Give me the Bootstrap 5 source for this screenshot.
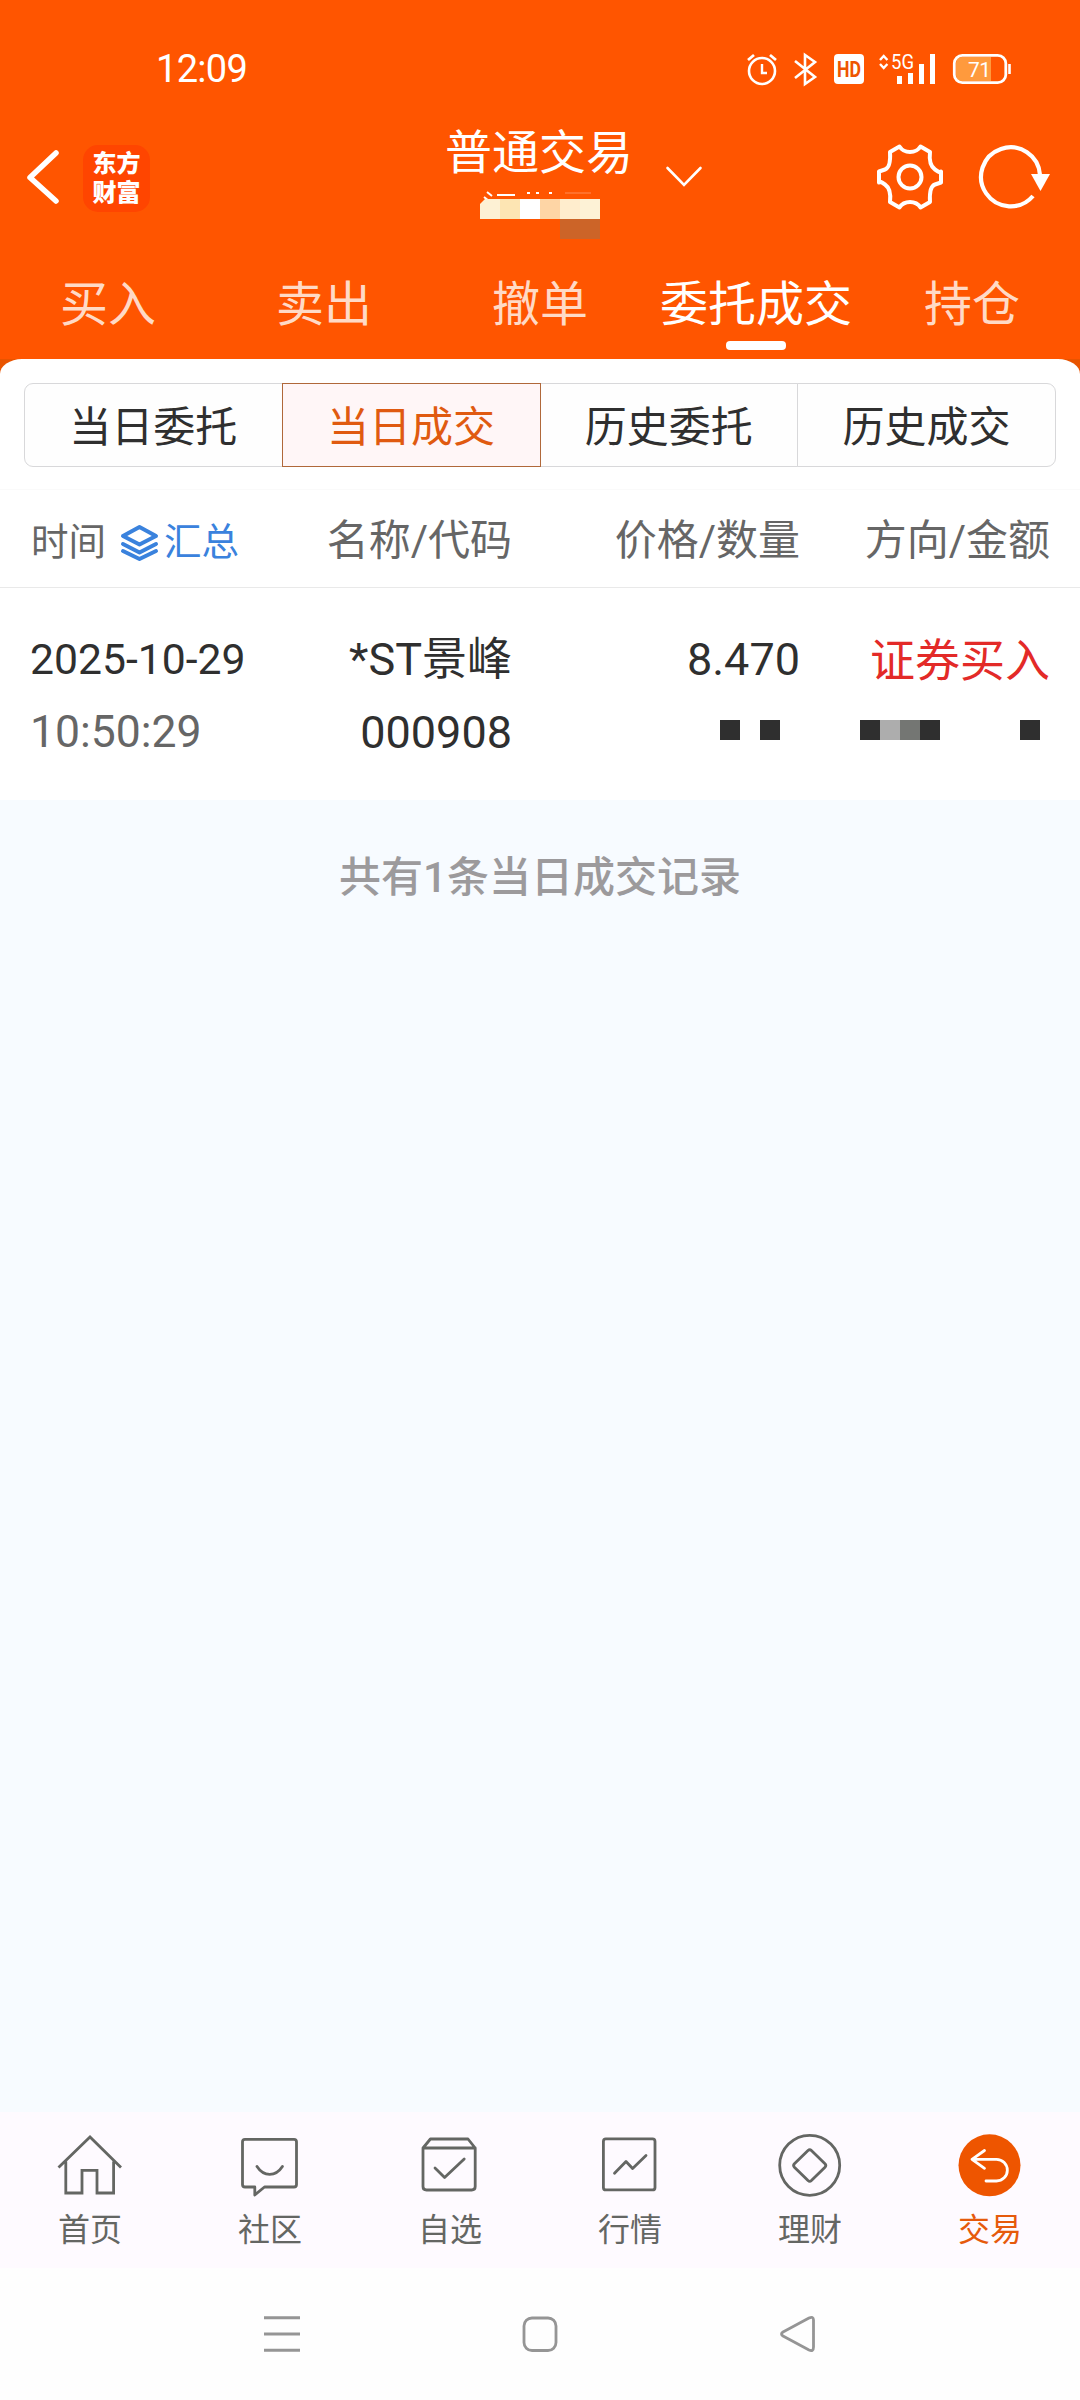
<!DOCTYPE html>
<html lang="zh-CN" data-bs-theme="light">
<head>
<meta charset="utf-8">
<meta name="viewport" content="width=device-width, initial-scale=1">
<title>普通交易</title>
<link href="https://cdn.jsdelivr.net/npm/bootstrap@5.3.0/dist/css/bootstrap.min.css" rel="stylesheet">
<style>
  body { font-family: Roboto, "Noto Sans CJK SC", sans-serif; background: #f7fbff; color: #2f2f2f; line-height: 1; }
  svg { display: block; flex: none; overflow: visible; }
  .screen { width: 1080px; height: 2400px; overflow: hidden; }
  .top-area { background: #ff5500; height: 359px; color: #fff; }
  .status-row { height: 120px; padding: 18px 69px 0 156px; }
  .clock { font-size: 38px; letter-spacing: -.7px; }
  .title-row { height: 138px; padding: 0 29px 0 27px; display: grid; grid-template-columns: 1fr auto 1fr; }
  .brand { width: 67px; height: 67px; border-radius: 15px; background: #ff4500; font: 900 24px/29px "Noto Sans CJK SC", sans-serif; margin-left: 24px; margin-top: 1px; padding-top: 2px; }
  .page-title { font-size: 47px; line-height: 66px; }
  .account-mask { margin: 3px 0 0 35px; height: 50px; }
  .pick-arrow { margin-left: 33px; }
  .refresh { margin-left: 36px; }
  .main-tabs { height: 101px; }
  .main-tabs .nav-link { flex: 1 1 0; width: 216px; padding: 22px 0 0; font-size: 48px; line-height: 50px; color: #ffdac6; border-radius: 0; white-space: nowrap; }
  .main-tabs .nav-link.active { color: #fff; background: none; }
  .main-tabs .nav-link.active::after { content: ""; display: block; width: 60px; height: 9px; border-radius: 4px; background: #fff; margin: 11px auto 0; }
  .sheet-wrap { background: #e85400; height: 15px; }
  .sheet-top { height: 15px; background: #fff; border-radius: 22px 22px 0 0 / 15px 15px 0 0; }
  .panel { height: 426px; background: #fff; padding-top: 9px; }
  .segments { margin: 0 24px; height: 84px; }
  .segments .btn { --bs-btn-border-radius: 9px; flex: 1 1 0; font-size: 42px; line-height: 1; padding: 5px 0 0; border: 1px solid #d8d8da; color: #2f2f2f; background: #fefefe; white-space: nowrap; }
  .segments .btn.active { color: #e05a10; background: #fff6f7; border-color: #b0683a; }
  .seg-rule { height: 1px; margin-top: 22px; background: #fafafa; }
  .grid-row { display: grid; grid-template-columns: 300px 212px 288px 250px 30px; }
  .col-heads { height: 98px; border-bottom: 1px solid #e9e9e9; font-size: 42px; color: #666; padding-top: 5px; }
  .col-heads .name-head { padding-right: 0; transform: none; }
  .time-head { padding-left: 31px; font-size: 37.5px; padding-top: 4px; }
  .summary-link { color: #3a82dd; }
  .layers-ico { margin: 0 6px 0 15px; }
  .record { font-size: 45px; padding-top: 35px; }
  .record .grid-row { height: 73px; }
  .d-date { font-size: 42.700px; padding-left: 30px; }
  .d-time { color: #666; padding-left: 30px; font-size: 44.500px; }
  .buy { color: #e32a28; padding-top: 3px; }
  .mosaic { margin-bottom: 5px; }
  .empty-area { height: 1312px; padding-top: 52px; font-size: 42px; line-height: 52px; font-weight: 500; color: #9c9a9c; background: #f7fbff; }
  .app-bar { height: 156px; background: #fefaff; color: #646663; }
  .app-bar a { flex: 1 1 0; color: inherit; text-decoration: none; padding-top: 17px; font-size: 32px; line-height: 40px; }
  .app-bar svg { margin-bottom: 9px; }
  .app-bar a.active { color: #e65a0c; }
  .line-ico { fill: none; stroke: currentColor; stroke-width: 2.8; stroke-linejoin: round; stroke-linecap: round; }
  .sys-bar { height: 132px; background: #fefefe; color: #959595; gap: 222px; }
</style>
</head>
<body>
<div class="screen d-flex flex-column">
  <header class="top-area">
    <div class="status-row d-flex align-items-center justify-content-between">
      <span class="clock">12:09</span>
      <svg width="264" height="32" viewBox="747 53 264 32" fill="none" stroke="#fff">
        <circle cx="762" cy="71" r="13" stroke-width="2.6"/>
        <path d="M762 64v9h5" stroke-width="2.4"/>
        <path d="M748 60l6-5M776 60l-6-5" stroke-width="2.8"/>
        <path d="M795 61l20 16-10 7V55l10 7-20 16" stroke-width="2.6"/>
        <rect x="834" y="54" width="30" height="30" rx="4" fill="#fff" stroke="none"/>
        <text x="849" y="77" text-anchor="middle" textLength="24" lengthAdjust="spacingAndGlyphs" font-size="22" font-weight="700" fill="#ee5500" stroke="none">HD</text>
        <path d="M880 60l3.700-4 3.700 4M880 64l3.700 4 3.700-4" stroke-width="2.4"/>
        <text x="891" y="69" textLength="23" lengthAdjust="spacingAndGlyphs" font-size="20" fill="#fff" stroke="none">5G</text>
        <path d="M899.500 76v8M910.500 73v11M921.500 64v20M932.500 54v30" stroke-width="5"/>
        <path d="M962 57h29v24h-29q-6 0-6-6v-12q0-6 6-6z" fill="#ff9a3d" stroke="none"/>
        <rect x="954.300" y="55.300" width="51.500" height="27.400" rx="8" stroke-width="2.800"/>
        <path d="M1009.500 64v10" stroke-width="2.600"/>
        <text x="968" y="76.500" textLength="23" font-size="21" fill="#fff" stroke="none">71</text>
      </svg>
    </div>
    <div class="title-row">
      <div class="d-flex align-items-start pt-4">
        <svg width="32" height="67" viewBox="0 0 32 67"><path d="M29 9L3 33.500 29 57" fill="none" stroke="#fff" stroke-width="5.500" stroke-linecap="round" stroke-linejoin="round"/></svg>
        <div class="brand text-center">东方<br>财富</div>
      </div>
      <div class="text-center">
        <div class="page-title">普通交易</div>
        <svg class="account-mask" width="120" height="50" viewBox="480 190 120 50">
          <path d="M487 193l5 4M484 198l5 4M497 196h18M527 194h3M536 194h3M549 194h3" stroke="#fff" stroke-width="2"/>
          <path d="M565 194h26" stroke="#ff8d55"/>
          <path d="M485 200h15v20h-20v-15z" fill="#fdf1d4"/>
          <path d="M500 200h20v20h-20z" fill="#fde5b3"/>
          <path d="M520 200h20v20h-20z" fill="#fff"/>
          <path d="M540 200h20v20h-20z" fill="#fed5a5"/>
          <path d="M560 200h20v20h-20z" fill="#ffedcd"/>
          <path d="M580 200h20v20h-20z" fill="#fdf2d6"/>
          <path d="M560 220h40v20h-40z" fill="#cc6428"/>
        </svg>
      </div>
      <div class="d-flex align-items-start justify-content-end pt-4">
        <svg class="pick-arrow me-auto" width="36" height="67" viewBox="666 144 36 67"><path d="M667.500 168L684 185l16.500-17" fill="none" stroke="#fff" stroke-width="2.600" stroke-linecap="round"/></svg>
        <svg width="66" height="66" viewBox="-33 -33 66 66" fill="none" stroke="#fff" stroke-width="4" stroke-linejoin="round">
          <path d="M-10.500-30.500Q-7-25 0-25T10.500-30.500L20-25Q18.500-12 25-7.500T31-5.500V5.500Q31 5.500 25 7.500T20 25L10.500 30.500Q7 25 0 25T-10.500 30.500L-20 25Q-18.500 12-25 7.500T-31 5.500V-5.500Q-31-5.500-25-7.500T-20-25Z"/>
          <circle r="11.500"/>
        </svg>
        <svg class="refresh" width="72" height="66" viewBox="979 144 72 66">
          <path d="M1033 196A29.500 29.500 0 1 1 1040 175" fill="none" stroke="#fff" stroke-width="4.200"/>
          <path d="M1031 174h19l-9.500 17z" fill="#fff"/>
        </svg>
      </div>
    </div>
    <nav class="main-tabs nav nav-pills flex-nowrap text-center">
      <a class="nav-link">买入</a>
      <a class="nav-link">卖出</a>
      <a class="nav-link">撤单</a>
      <a class="nav-link active">委托成交</a>
      <a class="nav-link">持仓</a>
    </nav>
  </header>

  <div class="sheet-wrap"><div class="sheet-top"></div></div>
  <main>
    <section class="panel">
      <div class="segments btn-group d-flex">
        <button class="btn">当日委托</button>
        <button class="btn active">当日成交</button>
        <button class="btn">历史委托</button>
        <button class="btn">历史成交</button>
      </div>
      <div class="seg-rule"></div>
      <div class="grid-row col-heads align-items-center text-end">
        <div class="time-head d-flex align-items-center">时间
          <span class="summary-link d-flex align-items-center">
            <svg class="layers-ico" width="37" height="36" viewBox="0 0 37 36" fill="none" stroke="currentColor" stroke-width="4" stroke-linejoin="round" stroke-linecap="round"><path d="M18.500 2L35 11 18.500 19.500 2 11zM2 19l16.500 8.500L35 19M2 26l16.500 8L35 26"/></svg>汇总</span>
        </div>
        <div>名称/代码</div><div>价格/数量</div><div>方向/金额</div>
      </div>
      <div class="record">
        <div class="grid-row align-items-center text-end">
          <div class="d-date text-start">2025-10-29</div><div>*ST景峰</div><div>8.470</div><div class="buy">证券买入</div>
        </div>
        <div class="grid-row align-items-center text-end">
          <div class="d-time text-start">10:50:29</div><div>000908</div>
          <svg class="mosaic ms-auto" width="80" height="20" viewBox="720 0 80 20" fill="#2f2f2f"><path d="M720 0h20v20h-20zM760 0h20v20h-20z"/></svg>
          <svg class="mosaic ms-auto" width="190" height="20" viewBox="860 0 190 20" fill="#2f2f2f"><path d="M860 0h20v20h-20zM920 0h20v20h-20zM1020 0h20v20h-20z"/><path d="M880 0h20v20h-20z" fill="#adadad"/><path d="M900 0h20v20h-20z" fill="#747673"/></svg>
        </div>
      </div>
    </section>
    <section class="empty-area text-center">共有1条当日成交记录</section>
  </main>

  <nav class="app-bar d-flex text-center">
    <a class="d-flex flex-column align-items-center"><svg class="line-ico" width="72" height="72"><path d="M4.500 38.500L36 8l31 30.500M11.800 32.500V64H28V41.300h15V64h16.600V32.500" stroke-linecap="butt" stroke-linejoin="miter"/></svg>首页</a>
    <a class="d-flex flex-column align-items-center"><svg class="line-ico" width="72" height="72"><path d="M11 10.300h49q2.500 0 2.500 2.500V55.500q0 2.500-2.500 2.500H30.500l-9.700 8V58H11q-2.500 0-2.500-2.500V12.800q0-2.500 2.500-2.500zM23 37.500q5 7.800 12.700 7.800T48.400 37.500"/></svg>社区</a>
    <a class="d-flex flex-column align-items-center"><svg class="line-ico" width="72" height="72"><path d="M9 19L16.400 10H54l7.200 9v38.500q0 3.500-3.500 3.500H12.500Q9 61 9 57.500zM9 19h52.200M21 39l9.600 9.500L50.200 30"/></svg>自选</a>
    <a class="d-flex flex-column align-items-center"><svg class="line-ico" width="72" height="72"><rect x="9.400" y="9.900" width="51.600" height="51" rx="2.500"/><path d="M20.500 44.300L32 32.500l6.600 7L52 26.500"/></svg>行情</a>
    <a class="d-flex flex-column align-items-center"><svg class="line-ico" width="72" height="72"><circle cx="35.700" cy="36.300" r="30"/><path d="M34 21.500q1.700-1.600 3.400 0L51 34.800q1.600 1.700 0 3.400L37.400 51.600q-1.700 1.600-3.400 0L20.400 38.200q-1.600-1.700 0-3.400z"/></svg>理财</a>
    <a class="active d-flex flex-column align-items-center"><svg class="line-ico" width="72" height="72"><circle cx="35.500" cy="36.300" r="31" fill="#ee5500" stroke="none"/><path d="M30.500 21.500L18 30.300l12.500 9M18 30.300h24.500a10.800 10.800 0 0 1 0 21.700H32" stroke="#fff"/></svg>交易</a>
  </nav>
  <footer class="sys-bar d-flex justify-content-center">
    <svg width="36" height="132" stroke="currentColor" stroke-width="3"><path d="M0 49.700h36M0 66h36M0 82.300h36"/></svg>
    <svg class="line-ico" width="36" height="132"><rect x="2" y="50" width="32" height="32.500" rx="8"/></svg>
    <svg class="line-ico" width="36" height="132"><path d="M3 64L29 50Q33.500 48 33.500 52V79Q33.500 84 29 82L3 68Q0 66 3 64z"/></svg>
  </footer>
</div>
<script src="https://cdn.jsdelivr.net/npm/bootstrap@5.3.0/dist/js/bootstrap.bundle.min.js"></script>
</body>
</html>
